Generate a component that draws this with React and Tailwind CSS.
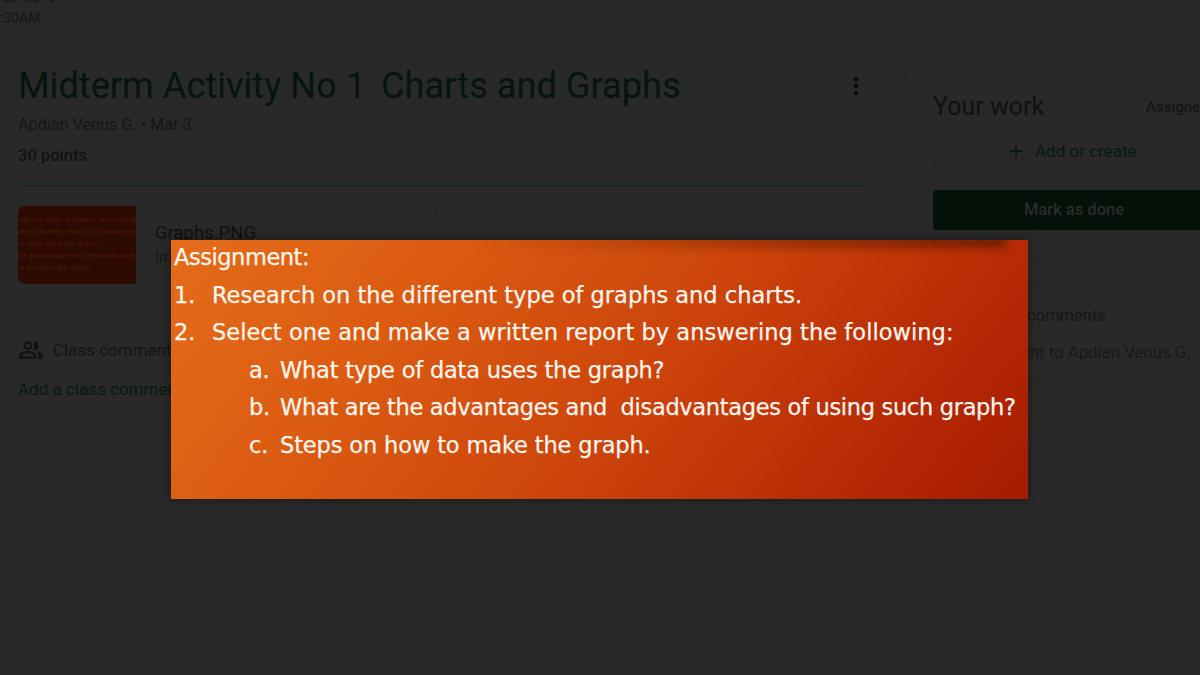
import React from "react";
import { Plus } from "lucide-react";

const lines = [
  { text: "Assignment:", cls: "pl-[3px] tracking-[-0.45px]" },
  { num: "1.", text: "Research on the different type of graphs and charts.", cls: "pl-[3px]" },
  { num: "2.", text: "Select one and make a written report by answering the following:", cls: "pl-[3px] tracking-[0.05px]" },
  { sub: "a.", text: "What type of data uses the graph?", cls: "pl-[78px] tracking-[-0.2px]" },
  { sub: "b.", text: "What are the advantages and  disadvantages of using such graph?", cls: "pl-[78px] tracking-[-0.31px]" },
  { sub: "c.", text: "Steps on how to make the graph.", cls: "pl-[78px] tracking-[-0.13px]" },
];

const thumbLines = [
  "ifferent type of graphs and charts.",
  "ake a written report by answering",
  "of data uses the graph?",
  "he advantages and  disadvantages of",
  "w to make the graph.",
];

function PeopleIcon() {
  return (
    <svg viewBox="0 0 24 24" className="w-[26px] h-[26px] shrink-0 fill-[#121212]">
      <path d="M16.67 13.13C18.04 14.06 19 15.32 19 17v3h4v-3c0-2.18-3.57-3.47-6.33-3.87z" />
      <path d="M15 12c2.21 0 4-1.79 4-4s-1.79-4-4-4c-.47 0-.91.1-1.33.24C14.5 5.27 15 6.58 15 8s-.5 2.73-1.33 3.76c.42.14.86.24 1.33.24z" />
      <path d="M9 12c2.21 0 4-1.79 4-4s-1.79-4-4-4-4 1.79-4 4 1.79 4 4 4zm0-6c1.1 0 2 .9 2 2s-.9 2-2 2-2-.9-2-2 .9-2 2-2z" />
      <path d="M9 13c-2.67 0-8 1.34-8 4v3h16v-3c0-2.66-5.33-4-8-4zm6 5H3v-.99C3.2 16.29 6.3 15 9 15s5.8 1.29 6 2z" />
    </svg>
  );
}

function AssignmentSlide() {
  return (
    <div className="absolute left-[171px] top-[240px] w-[857px] h-[259px] overflow-hidden bg-[linear-gradient(128deg,#e46c1a_0%,#dc5c12_26%,#cc440b_55%,#b82b06_80%,#a61b00_100%)] shadow-[0_0_10px_rgba(0,0,0,0.45)]">
      <div className="absolute left-[300px] -top-[4px] w-[535px] h-[12px] bg-[linear-gradient(90deg,rgba(60,20,0,0)_0%,rgba(60,20,0,0.6)_100%)] blur-[4px]" />
      <div className="relative -mt-[1px] flex flex-col font-['DejaVu_Sans',sans-serif] text-[22.5px] leading-[37.6px] text-[#fdf6ee] [-webkit-text-stroke:0.25px_#fdf6ee] whitespace-pre">
        {lines.map((l) => (
          <div key={l.text} className={l.cls}>
            {l.num && <span className="inline-block w-[38px]">{l.num}</span>}
            {l.sub && <span className="inline-block w-[31px]">{l.sub}</span>}
            {l.text}
          </div>
        ))}
      </div>
    </div>
  );
}

function Thumb() {
  return (
    <div className="w-[118px] h-[78px] shrink-0 overflow-hidden rounded-l-lg bg-[#2d0a00] pt-[8px] font-['Roboto',sans-serif] text-[8px] leading-[12px] text-[#4c1706] whitespace-nowrap">
      {thumbLines.map((t) => (
        <div key={t}>{t}</div>
      ))}
    </div>
  );
}

export default function App() {
  return (
    <div className="relative w-[1200px] h-[675px] overflow-hidden bg-[#292929] font-['Roboto',sans-serif]">
      <div className="h-[41px] border-b border-[#262626] overflow-hidden">
        <div className="-mt-[11px] text-[14px] leading-[16px] text-[#171717]">
          <div className="-ml-[8px]">Due Mar 04</div>
          <div className="mt-[5px] -ml-[8px] text-[#161616]">9:30AM</div>
        </div>
      </div>

      <div className="flex">
        <div className="w-[905px] shrink-0 pl-[18px] pr-[37px]">
          <div className="flex items-start justify-between pt-[23px]">
            <h1 className="text-[36.2px] leading-[44px] text-[#05150d] whitespace-pre">
              Midterm Activity No 1 <span className="ml-[6px]">Charts and Graphs</span>
            </h1>
            <svg viewBox="0 0 24 24" className="w-6 h-6 mt-[10px] fill-[#0a0a0a]">
              <circle cx="12" cy="5" r="2.2" />
              <circle cx="12" cy="12" r="2.2" />
              <circle cx="12" cy="19" r="2.2" />
            </svg>
          </div>
          <div className="mt-[7px] text-[16.2px] leading-[20px] text-[#161616]">Apdian Venus G. • Mar 3</div>
          <div className="mt-[11px] text-[16.5px] leading-[20px] font-medium text-[#121212]">30 points</div>
          <div className="mt-[19px] h-px bg-[#0a2a1b]" />

          <div className="mt-[19px] flex w-[419px] h-[80px] border border-[#262626] rounded-lg -ml-px">
            <Thumb />
            <div className="pl-[19px] pt-[16px]">
              <div className="text-[18.5px] leading-[22px] text-[#101010]">Graphs.PNG</div>
              <div className="mt-[3px] text-[15px] leading-[20px] text-[#181818]">Image</div>
            </div>
          </div>

          <div className="mt-[33px] border-t border-[#262626] pt-[18px] flex items-center gap-[9px]">
            <PeopleIcon />
            <span className="text-[17px] leading-[20px] text-[#141414]">Class comments</span>
          </div>
          <div className="mt-[16px] text-[17px] leading-[20px] text-[#07190f]">Add a class comment</div>
        </div>

        <div className="w-[340px] shrink-0">
          <div className="mt-[24px] h-[192px] border border-[#262626] rounded-lg pl-[27px] pt-[25px]">
            <div className="flex items-center">
              <span className="w-[213px] text-[25px] leading-[32px] text-[#101010]">Your work</span>
              <span className="text-[15px] leading-[20px] font-medium text-[#151515]">Assigned</span>
            </div>
            <div className="mt-[9px] h-[38px] w-[340px] border border-[#272727] rounded-lg flex items-center pl-[72px] gap-[9px]">
              <Plus className="w-5 h-5 text-[#06140c]" strokeWidth={1.6} />
              <span className="text-[17px] leading-[20px] text-[#07190f]">Add or create</span>
            </div>
            <div className="mt-[20px] h-[40px] w-[340px] bg-[#031108] rounded flex items-center pl-[91px] text-[16.5px] font-medium text-[#2c2c2c]">Mark as done</div>
          </div>
          <div className="mt-[26px] h-[98px] border border-[#262626] rounded-lg pl-[66px] pt-[22px]">
            <div className="text-[16.5px] leading-[20px] text-[#161616]">Private comments</div>
            <div className="mt-[16px] -ml-[33px] text-[16.8px] leading-[20px] text-[#181818] whitespace-nowrap">Add comment to Apdian Venus G.</div>
          </div>
        </div>
      </div>

      <AssignmentSlide />
    </div>
  );
}
